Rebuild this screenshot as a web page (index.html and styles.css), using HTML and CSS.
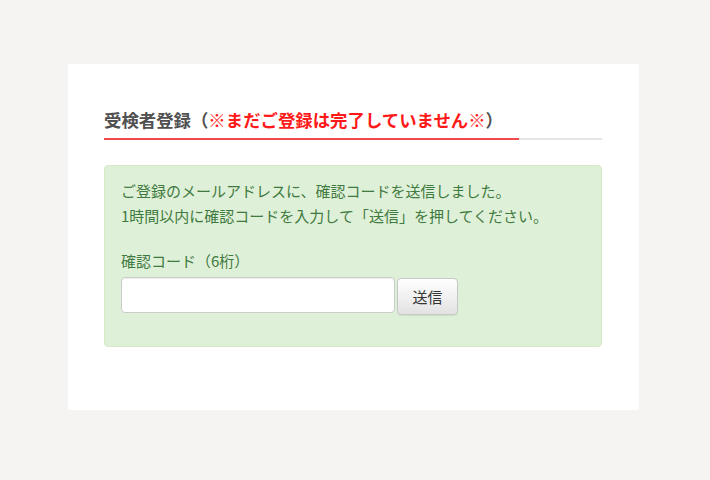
FILE: index.html
```html
<!DOCTYPE html>
<html lang="ja">
<head>
<meta charset="utf-8">
<link rel="stylesheet" href="styles.css">
</head>
<body>
<div class="page">
  <div class="card">
    <h2 class="title"><span class="title-inner">受検者登録（<span class="warn">※まだご登録は完了していません※</span>）</span></h2>
    <div class="alert">
      <p class="msg">ご登録のメールアドレスに、確認コードを送信しました。<br>1時間以内に確認コードを入力して「送信」を押してください。</p>
      <label class="label" for="code">確認コード（6桁）</label>
      <div class="row">
        <input class="input" id="code" type="text">
        <button class="btn" type="button">送信</button>
      </div>
    </div>
  </div>
</div>
</body>
</html>
```

FILE: styles.css
```css
html, body {
  margin: 0;
  padding: 0;
  background: #f5f4f2;
  font-family: "Noto Sans CJK JP", "Noto Sans", sans-serif;
}
.page {
  padding: 64px 0 0 68px;
}
.card {
  box-sizing: border-box;
  width: 571px;
  height: 346px;
  background: #fff;
  padding: 44px 37px 0 36px;
}
.title {
  display: flex;
  margin: 0;
  font-size: 17.4px;
  line-height: 24px;
  font-weight: bold;
  color: #505050;
  border-bottom: 2px solid #e6e6e6;
}
.title-inner {
  display: block;
  padding: 0 16px 6px 0;
  margin-bottom: -2px;
  border-bottom: 2px solid #f24a4a;
}
.warn {
  color: #ff1a1a;
}
.alert {
  margin-top: 25px;
  background: #dff0d8;
  border: 1px solid #d6e9c6;
  border-radius: 4px;
  padding: 12px 16px 31px 16px;
  color: #3f7a40;
  font-size: 15px;
  line-height: 25px;
}
.msg {
  margin: 0 0 20px 0;
}
.label {
  display: block;
  margin-bottom: 4px;
}
.row {
  display: flex;
  align-items: flex-start;
}
.input {
  box-sizing: border-box;
  width: 274px;
  height: 36px;
  margin: 0;
  border: 1px solid #cccccc;
  border-radius: 4px;
  background: #fff;
  box-shadow: inset 0 1px 1px rgba(0,0,0,0.075);
  font-family: inherit;
  font-size: 15px;
}
.btn {
  box-sizing: border-box;
  width: 61px;
  height: 37px;
  margin: 1px 0 0 2px;
  padding: 0;
  border: 1px solid #c8c8c8;
  border-radius: 4px;
  background: linear-gradient(#ffffff, #e2e2e2);
  box-shadow: 0 1px 1px rgba(0,0,0,0.08);
  color: #333;
  font-family: inherit;
  font-size: 15px;
}
```
